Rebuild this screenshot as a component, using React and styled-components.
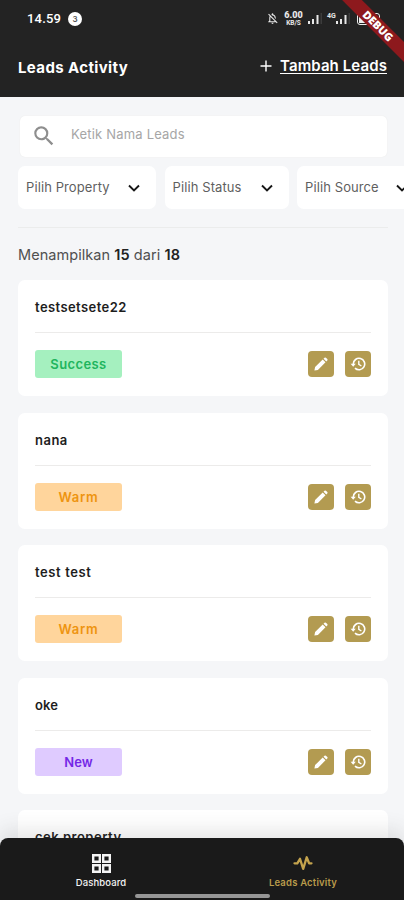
import React from 'react';
import styled, { createGlobalStyle } from 'styled-components';
import { MdSearch, MdOutlineNotificationsOff } from 'react-icons/md';

const leads = [
    { name: 'testsetsete22', status: 'Success', spacing: 0.42 },
    { name: 'nana', status: 'Warm', spacing: 0.5 },
    { name: 'test test', status: 'Warm', spacing: 0.6 },
    { name: 'oke', status: 'New', spacing: 0.1 },
    { name: 'cek property', spacing: 0.5 },
];

const statusColors = {
    Success: { bg: '#a5f0bf', text: '#20b55d', spacing: 0.4 },
    Warm: { bg: '#ffd59c', text: '#ee9411', spacing: 0.7 },
    New: { bg: '#dfcbff', text: '#7428e6', spacing: 0.1 },
};

const filters = [
    { label: 'Pilih Property', width: 138 },
    { label: 'Pilih Status', width: 124 },
    { label: 'Pilih Source', width: 127 },
];

const SignalBars = () => (
    <svg width="14" height="11" viewBox="0 0 14 11">
        <path d="M0 8h2v3H0zM4 6h2v5H4zM8.5 2h2v9h-2z" fill="#e8e8e8" />
        <path d="M12.5 0H14v11h-1.5z" fill="#3c3c3c" />
    </svg>
);

const PencilIcon = () => (
    <svg width="14" height="14" viewBox="0 0 14 14">
        <path d="M.4 13.6l.7-3.5 7.6-7.6 2.8 2.8-7.6 7.6zM9.5 1.7l1-1q.7-.6 1.4 0l1.4 1.4q.6.7 0 1.4l-1 1z" fill="#fff" />
    </svg>
);

const HistoryIcon = () => (
    <svg width="16" height="14" viewBox="0 0 16 14">
        <path d="M3.3 7a5.7 5.7 0 1 1 1.7 4.1" fill="none" stroke="#fff" strokeWidth="1.6" />
        <path d="M.6 6.8h5.2L3.2 9.8z" fill="#fff" />
        <path d="M8.8 3.8v3.6l2.6 1.6" fill="none" stroke="#fff" strokeWidth="1.4" />
    </svg>
);

const ChevronIcon = () => (
    <svg width="14" height="10" viewBox="0 0 14 10">
        <path d="M2 2.5l5 5 5-5" fill="none" stroke="#161616" strokeWidth="1.9" />
    </svg>
);

const DashboardIcon = () => (
    <svg width="19" height="19" viewBox="0 0 19 19">
        <path d="M1.2 1.2h6.6v6.6H1.2zM11.2 1.2h6.6v6.6h-6.6zM1.2 11.2h6.6v6.6H1.2zM11.2 11.2h6.6v6.6h-6.6z" fill="none" stroke="#f4f4f4" strokeWidth="2.4" />
    </svg>
);

const ActivityIcon = () => (
    <svg width="20" height="17" viewBox="0 0 20 17">
        <path d="M1.5 9.3h2.8L7 4.8l3.2 10 3.5-11.5 2.4 6h2.4" fill="none" stroke="#c4a34d" strokeWidth="2.3" strokeLinejoin="round" strokeLinecap="round" />
    </svg>
);

const App = () => {
    return (
        <Screen>
            <GlobalStyle />
            <Header>
                <StatusBar>
                    <Clock>14.59</Clock>
                    <Notice>3</Notice>
                    <StatusIcons>
                        <MdOutlineNotificationsOff size={13} />
                        <Speed><b>6.00</b><small>KB/S</small></Speed>
                        <SignalBars />
                        <Network><small>4G</small><SignalBars /></Network>
                        <Battery><i /></Battery>
                    </StatusIcons>
                </StatusBar>
                <TitleRow>
                    <Title>Leads Activity</Title>
                    <AddLink href="#">
                        <svg width="12" height="12" viewBox="0 0 12 12">
                            <path d="M6 .5v11M.5 6h11" stroke="#fff" strokeWidth="1.4" />
                        </svg>
                        <span>Tambah Leads</span>
                    </AddLink>
                </TitleRow>
                <Ribbon>DEBUG</Ribbon>
            </Header>
            <Content>
                <SearchBox>
                    <MdSearch size={26} />
                    <span>Ketik Nama Leads</span>
                </SearchBox>
                <Filters>
                    {filters.map((filter) => (
                        <Filter key={filter.label} $width={filter.width}>
                            <span>{filter.label}</span>
                            <ChevronIcon />
                        </Filter>
                    ))}
                </Filters>
                <Separator />
                <Count>Menampilkan <b>15</b> dari <b>18</b></Count>
                <List>
                    {leads.map((lead) => (
                        <Card key={lead.name}>
                            <Name $spacing={lead.spacing}>{lead.name}</Name>
                            {lead.status && (
                                <CardRow>
                                    <Badge $colors={statusColors[lead.status]}>{lead.status}</Badge>
                                    <Actions>
                                        <ActionButton aria-label="Edit"><PencilIcon /></ActionButton>
                                        <ActionButton aria-label="History"><HistoryIcon /></ActionButton>
                                    </Actions>
                                </CardRow>
                            )}
                        </Card>
                    ))}
                </List>
            </Content>
            <BottomNav>
                <NavItem>
                    <DashboardIcon />
                    <span>Dashboard</span>
                </NavItem>
                <NavItem $active>
                    <ActivityIcon />
                    <span>Leads Activity</span>
                </NavItem>
                <HomeBar />
            </BottomNav>
        </Screen>
    );
};

export default App;

const GlobalStyle = createGlobalStyle`
* {
    box-sizing: border-box;
}

body {
    margin: 0;
    overflow: hidden;
}
`;

//PAGE
const Screen = styled.div`
position: relative;
display: flex;
flex-direction: column;
width: 404px;
height: 900px;
overflow: hidden;
background: #f5f6f8;
font-family: Inter, "Liberation Sans", sans-serif;

svg {
    display: block;
    flex: none;
}
`;

//HEADER
const Header = styled.header`
position: relative;
flex: none;
height: 97px;
overflow: hidden;
background: #232323;
color: #fff;
`;

const StatusBar = styled.div`
display: flex;
align-items: center;
height: 37px;
padding: 0 24px 0 27px;
`;

const Clock = styled.span`
width: 34px;
font: 500 13px/16px Roboto, sans-serif;
letter-spacing: 0.2px;
white-space: nowrap;
`;

const Notice = styled.span`
display: flex;
align-items: center;
justify-content: center;
width: 14px;
height: 14px;
margin-left: 7px;
border-radius: 50%;
background: #fff;
color: #555;
font-size: 8px;
font-weight: 600;
`;

const StatusIcons = styled.div`
display: flex;
align-items: center;
margin-left: auto;
color: #e8e8e8;
gap: 5px;
`;

const Speed = styled.div`
display: flex;
flex-direction: column;
align-items: center;
width: 19px;
font: 700 9px/9px Roboto, sans-serif;

b {
    height: 9px;
}

small {
    height: 7px;
    font-size: 6.5px;
    line-height: 7px;
}
`;

const Network = styled.div`
display: flex;
align-items: center;
width: 23px;

small {
    margin-top: -5px;
    font: 700 7px/7px Roboto, sans-serif;
}
`;

const Battery = styled.div`
width: 23px;
height: 12px;
margin-left: 2px;
padding: 1px;
border: 1.5px solid #eee;
border-radius: 3px;

i {
    display: block;
    width: 8px;
    height: 100%;
    background: #eee;
}
`;

const TitleRow = styled.div`
display: flex;
align-items: center;
justify-content: space-between;
height: 60px;
padding: 0 17px 0 18px;
`;

const Title = styled.h1`
margin: 0;
font-size: 15px;
font-weight: 700;
letter-spacing: 0.38px;
`;

const AddLink = styled.a`
display: flex;
align-items: center;
gap: 8px;
margin-top: -2px;
color: #fff;
font-size: 15px;
font-weight: 600;
letter-spacing: 0.1px;
text-decoration: none;

span {
    border-bottom: 1px solid #fff;
    line-height: 15px;
}
`;

const Ribbon = styled.div`
position: absolute;
top: 19px;
left: 328px;
width: 100px;
height: 14px;
background: #8d191d;
font: 900 11px/14px "Open Sans", sans-serif;
text-align: center;
transform: rotate(45deg);
`;

//CONTENT
const Content = styled.main`
flex: 1;
min-height: 0;
padding: 19px 16px 0 18px;
`;

const SearchBox = styled.div`
display: flex;
align-items: center;
gap: 14px;
height: 41px;
margin: 0 1px 9px 2px;
padding: 0 11px;
border-radius: 5px;
background: #fff;
box-shadow: 0 0 1px #e4e4e0;
color: #8e8e8e;
font-size: 13px;
letter-spacing: 0.2px;

svg {
    margin-top: -2px;
}

span {
    margin-top: -5px;
    color: #a6a6a6;
}
`;

const Filters = styled.div`
display: flex;
gap: 8.5px;
width: 386px;
height: 43px;
overflow: hidden;
`;

const Filter = styled.div`
display: flex;
flex: none;
align-items: center;
justify-content: space-between;
width: ${(props) => props.$width}px;
height: 43px;
padding: 0 15px 0 8px;
border-radius: 7px;
background: #fff;
color: #5f5f5f;
font-size: 13px;
letter-spacing: 0.1px;

span {
    margin-top: -1px;
}
`;

const Separator = styled.div`
height: 1px;
margin: 18px 0 18px;
background: #ebecec;
`;

const Count = styled.p`
margin: 0 0 16px;
color: #505050;
font-size: 14.5px;
line-height: 18px;
letter-spacing: 0.06px;

b {
    color: #222;
    font-weight: 600;
}
`;

//LEAD CARDS
const List = styled.div`
display: flex;
flex-direction: column;
gap: 16.6px;
`;

const Card = styled.article`
flex: none;
height: 116px;
padding: 0 17px;
border-radius: 7px;
background: #fff;
`;

const Name = styled.h2`
height: 53px;
margin: 0;
border-bottom: 1px solid #ecebea;
color: #1d1d1d;
font-size: 13px;
font-weight: 600;
line-height: 54px;
letter-spacing: ${(props) => props.$spacing}px;
`;

const CardRow = styled.div`
display: flex;
align-items: center;
justify-content: space-between;
height: 62px;
`;

const Badge = styled.span`
width: 87px;
height: 28px;
border-radius: 3px;
background: ${(props) => props.$colors.bg};
color: ${(props) => props.$colors.text};
font-size: 13px;
font-weight: 600;
line-height: 28px;
letter-spacing: ${(props) => props.$colors.spacing}px;
text-align: center;
`;

const Actions = styled.div`
display: flex;
gap: 11px;
`;

const ActionButton = styled.button`
display: flex;
align-items: center;
justify-content: center;
width: 26px;
height: 26px;
padding: 0;
border: 0;
border-radius: 4px;
background: #b39b51;
color: #fff;
`;

//BOTTOM NAV
const BottomNav = styled.nav`
position: absolute;
right: 0;
bottom: 0;
left: 0;
display: flex;
height: 62px;
border-radius: 8px 8px 0 0;
background: #1a1a1a;
box-shadow: 0 -8px 20px rgba(60, 60, 60, 0.13);
`;

const NavItem = styled.div`
display: flex;
flex: 1;
flex-direction: column;
align-items: center;
padding-top: 16px;
color: ${(props) => (props.$active ? '#b99b4b' : '#f4f4f4')};

span {
    margin-top: auto;
    margin-bottom: 11px;
    font-size: 9.5px;
    font-weight: ${(props) => (props.$active ? 600 : 500)};
    line-height: 13px;
    letter-spacing: ${(props) => (props.$active ? 0.2 : 0.1)}px;
}
`;

const HomeBar = styled.div`
position: absolute;
bottom: 2px;
left: 135px;
width: 135px;
height: 4px;
border-radius: 2px;
background: #969696;
`;
